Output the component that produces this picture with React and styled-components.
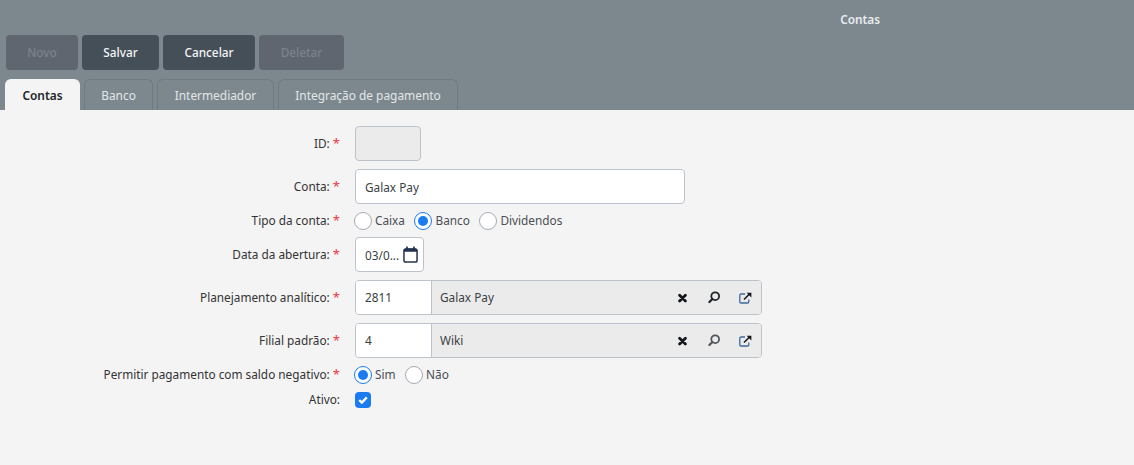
import styled, { createGlobalStyle } from "styled-components";

const Global = createGlobalStyle`
  html, body {
    margin: 0;
    padding: 0;
    background: #f4f4f4;
  }
  body {
    font-family: "Noto Sans", "Open Sans", sans-serif;
    font-size: 12px;
    color: #333;
  }
  * {
    box-sizing: border-box;
  }
`;

const Page = styled.div`
  width: 1134px;
  height: 465px;
  overflow: hidden;
  background: #f4f4f4;
`;
const Header = styled.header`
  height: 110px;
  background: #7c888e;
  display: flex;
  flex-direction: column;
`;
const Title = styled.h1`
  margin: 0;
  height: 35px;
  padding: 11px 254px 0 0;
  font-size: 11.8px;
  line-height: 16px;
  font-weight: 600;
  text-align: right;
  color: #e9ecee;
`;
const Toolbar = styled.div`
  display: flex;
  gap: 4px;
  padding-left: 6px;
  height: 35px;
`;
const ActionButton = styled.button`
  width: ${(p) => p.$width}px;
  height: 35px;
  padding: 0 0 2px;
  border: none;
  border-radius: 4px;
  font: 500 11.8px "Noto Sans", sans-serif;
  background: ${(p) => (p.disabled ? "#5f666f" : "#454f58")};
  color: ${(p) => (p.disabled ? "#7b838b" : "#f4f5f6")};
`;
const Tabs = styled.div`
  display: flex;
  gap: 4px;
  padding-left: 5px;
  margin-top: 9px;
  height: 31px;
`;
const Tab = styled.div`
  width: ${(p) => p.$width}px;
  height: 31px;
  display: flex;
  align-items: center;
  justify-content: center;
  padding-bottom: 1px;
  font-size: 11.9px;
  border-radius: 6px 6px 0 0;
  border: 1px solid ${(p) => (p.$active ? "#f4f4f4" : "#6e7b83")};
  border-bottom: none;
  font-weight: ${(p) => (p.$active ? 600 : 400)};
  background: ${(p) => (p.$active ? "#f4f4f4" : "transparent")};
  color: ${(p) => (p.$active ? "#212529" : "#e2e6e8")};
`;
const Form = styled.form`
  display: flex;
  flex-direction: column;
  gap: 8px;
  padding-top: 16px;
`;
const Row = styled.div`
  display: grid;
  grid-template-columns: 340px 1fr;
  column-gap: 15px;
  align-items: center;
  min-height: 17px;
`;
const Label = styled.label`
  text-align: right;
  font-size: 11.8px;
  line-height: 17px;
  color: #333;
`;
const Star = styled.span`
  color: #f0353f;
  font-size: 13px;
  line-height: 13px;
`;
const Input = styled.div`
  width: ${(p) => p.$width}px;
  height: 35px;
  display: flex;
  align-items: center;
  padding-left: 9px;
  font-size: 11.8px;
  border: 1px solid #bcc3cb;
  border-radius: 4px;
  background: ${(p) => (p.$disabled ? "#ebebeb" : "#fff")};
  color: #3a3f44;
`;
const DateInput = styled(Input)`
  justify-content: space-between;
  padding-right: 5px;
`;
const Lookup = styled.div`
  width: 407px;
  height: 35px;
  display: flex;
  border: 1px solid #bcc3cb;
  border-radius: 4px;
  overflow: hidden;
  font-size: 11.8px;
  color: #3a3f44;
`;
const LookupCode = styled.div`
  width: 76px;
  display: flex;
  align-items: center;
  padding: 0 0 2px 9px;
  background: #fff;
  border-right: 1px solid #bcc3cb;
`;
const LookupName = styled.div`
  flex: 1;
  display: flex;
  align-items: center;
  padding-left: 8px;
  background: #ebebeb;
`;
const LookupText = styled.span`
  margin-top: -2px;
`;
const LookupIcons = styled.div`
  margin-left: auto;
  display: flex;
  align-items: center;
  gap: 19px;
  padding-right: 9px;
`;
const Options = styled.div`
  display: flex;
  align-items: center;
  gap: 9.5px;
  height: 17px;
  margin-left: -1px;
`;
const Option = styled.span`
  display: flex;
  align-items: center;
  gap: 3px;
  font-size: 11.8px;
  color: #4a4f55;
`;
const OptionText = styled.span`
  margin-top: -2px;
`;
const Radio = styled.span`
  width: 18px;
  height: 18px;
  flex: none;
  display: flex;
  align-items: center;
  justify-content: center;
  border-radius: 50%;
  background: #fff;
  border: 1px solid ${(p) => (p.$checked ? "#1a7cf0" : "#a4abb3")};
  &::after {
    content: "";
    display: ${(p) => (p.$checked ? "block" : "none")};
    width: 10px;
    height: 10px;
    border-radius: 50%;
    background: #1a7cf0;
  }
`;
const Check = styled.span`
  width: 16px;
  height: 16px;
  display: flex;
  align-items: center;
  justify-content: center;
  border-radius: 4px;
  background: #1a7cf0;
  margin-top: 1px;
`;

const CalendarIcon = () => (
  <svg width="15" height="17" viewBox="0 0 16 18" fill="none">
    <path d="M1 4.5a2 2 0 0 1 2-2h10a2 2 0 0 1 2 2V6H1z" fill="#24344f" />
    <rect x="1" y="3" width="14" height="14" rx="2" stroke="#24344f" strokeWidth="1.6" />
    <rect x="3.4" y="0.5" width="1.8" height="3" fill="#24344f" />
    <rect x="10.8" y="0.5" width="1.8" height="3" fill="#24344f" />
  </svg>
);
const ClearIcon = () => (
  <svg width="11" height="10" viewBox="0 0 11 10">
    <path d="M1.6 2.2l5.8 5.8M7.4 2.2l-5.8 5.8" stroke="#14181c" strokeWidth="2.8" strokeLinecap="round" />
  </svg>
);
const SearchIcon = ({ color }) => (
  <svg width="12" height="13" viewBox="0 0 12 13" fill="none">
    <circle cx="7.2" cy="5.2" r="3.9" stroke={color} strokeWidth="1.8" />
    <path d="M4.4 8L1.4 11" stroke={color} strokeWidth="2.2" strokeLinecap="round" />
  </svg>
);
const OpenIcon = () => (
  <svg width="13" height="12" viewBox="0 0 13 12" fill="none">
    <path d="M6 2H2a1.2 1.2 0 0 0-1.2 1.2v6.6A1.2 1.2 0 0 0 2 11h6.6a1.2 1.2 0 0 0 1.2-1.2V7.4" stroke="#3d6a9c" strokeWidth="1.3" />
    <path d="M5 7.5L10.5 2" stroke="#14181c" strokeWidth="1.6" />
    <path d="M7.6 0.8H12.4V5.4z" fill="#14181c" />
  </svg>
);
const CheckIcon = () => (
  <svg width="10" height="8" viewBox="0 0 10 8" fill="none">
    <path d="M1.2 4l2.6 2.6L8.8 1.4" stroke="#fff" strokeWidth="2.4" />
  </svg>
);

const Field = ({ label, children }) => (
  <Row>
    <Label>
      {label}: <Star>*</Star>
    </Label>
    {children}
  </Row>
);

const LookupField = ({ label, code, name, searchColor }) => (
  <Field label={label}>
    <Lookup>
      <LookupCode>{code}</LookupCode>
      <LookupName>
        <LookupText>{name}</LookupText>
        <LookupIcons>
          <ClearIcon />
          <SearchIcon color={searchColor} />
          <OpenIcon />
        </LookupIcons>
      </LookupName>
    </Lookup>
  </Field>
);

const RadioOption = ({ checked, children }) => (
  <Option>
    <Radio $checked={checked} />
    <OptionText>{children}</OptionText>
  </Option>
);

export default function App() {
  return (
    <Page>
      <Global />
      <Header>
        <Title>Contas</Title>
        <Toolbar>
          <ActionButton $width={72} disabled>Novo</ActionButton>
          <ActionButton $width={77}>Salvar</ActionButton>
          <ActionButton $width={92}>Cancelar</ActionButton>
          <ActionButton $width={85} disabled>Deletar</ActionButton>
        </Toolbar>
        <Tabs>
          <Tab $width={75} $active>Contas</Tab>
          <Tab $width={69}>Banco</Tab>
          <Tab $width={117}>Intermediador</Tab>
          <Tab $width={180}>Integração de pagamento</Tab>
        </Tabs>
      </Header>
      <Form>
        <Field label="ID">
          <Input $width={66} $disabled />
        </Field>
        <Field label="Conta">
          <Input $width={330}>Galax Pay</Input>
        </Field>
        <Field label="Tipo da conta">
          <Options>
            <RadioOption>Caixa</RadioOption>
            <RadioOption checked>Banco</RadioOption>
            <RadioOption>Dividendos</RadioOption>
          </Options>
        </Field>
        <Field label="Data da abertura">
          <DateInput $width={69}>
            03/0...
            <CalendarIcon />
          </DateInput>
        </Field>
        <LookupField label="Planejamento analítico" code="2811" name="Galax Pay" searchColor="#20252a" />
        <LookupField label="Filial padrão" code="4" name="Wiki" searchColor="#50565c" />
        <Field label="Permitir pagamento com saldo negativo">
          <Options>
            <RadioOption checked>Sim</RadioOption>
            <RadioOption>Não</RadioOption>
          </Options>
        </Field>
        <Row>
          <Label>Ativo:</Label>
          <Check><CheckIcon /></Check>
        </Row>
      </Form>
    </Page>
  );
}
